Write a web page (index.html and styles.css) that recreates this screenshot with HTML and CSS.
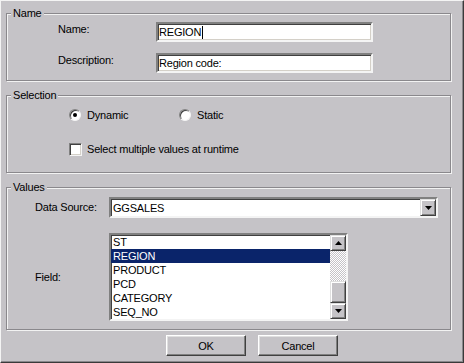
FILE: index.html
```html
<!DOCTYPE html>
<html>
<head>
<meta charset="utf-8">
<link rel="stylesheet" href="styles.css">
</head>
<body>
<div class="window">
  <fieldset class="group">
    <legend>Name</legend>
    <div class="form-grid">
      <span class="lbl">Name:</span>
      <div class="textbox"><span>REGION</span><span class="caret"></span></div>
      <span class="lbl">Description:</span>
      <div class="textbox"><span>Region code:</span></div>
    </div>
  </fieldset>
  <fieldset class="group">
    <legend>Selection</legend>
    <div class="sel-body">
      <div class="radio-row">
        <div class="opt opt-first"><span class="radio checked"></span><span>Dynamic</span></div>
        <div class="opt"><span class="radio"></span><span>Static</span></div>
      </div>
      <div class="opt"><span class="check"></span><span>Select multiple values at runtime</span></div>
    </div>
  </fieldset>
  <fieldset class="group group-last">
    <legend>Values</legend>
    <div class="val-grid">
      <span class="lbl">Data Source:</span>
      <div class="combo">
        <span class="combo-text">GGSALES</span>
        <span class="sbtn combo-btn"><svg width="7" height="4" viewBox="0 0 7 4"><polygon points="0,0 7,0 3.5,4" fill="#000"/></svg></span>
      </div>
      <span class="lbl">Field:</span>
      <div class="listbox">
        <ul class="items">
          <li>ST</li>
          <li class="selected">REGION</li>
          <li>PRODUCT</li>
          <li>PCD</li>
          <li>CATEGORY</li>
          <li>SEQ_NO</li>
        </ul>
        <div class="vscroll">
          <span class="sbtn"><svg width="7" height="4" viewBox="0 0 7 4"><polygon points="0,4 7,4 3.5,0" fill="#000"/></svg></span>
          <div class="track"><div class="thumb"></div></div>
          <span class="sbtn"><svg width="7" height="4" viewBox="0 0 7 4"><polygon points="0,0 7,0 3.5,4" fill="#000"/></svg></span>
        </div>
      </div>
    </div>
  </fieldset>
  <div class="buttons">
    <button class="btn">OK</button>
    <button class="btn">Cancel</button>
  </div>
</div>
</body>
</html>
```
FILE: styles.css
```css
body {
  margin: 0;
  background: #c5c3c7;
  font-family: "Liberation Sans", Arial, sans-serif;
  font-size: 11px;
  letter-spacing: -0.2px;
  color: #000;
}

.window {
  width: 464px;
  height: 363px;
  box-sizing: border-box;
  border-top: 1px solid #f4f4f4;
  border-left: 1px solid #f4f4f4;
  border-right: 1px solid #3a3a3a;
  border-bottom: 1px solid #3a3a3a;
  box-shadow: inset -1px -1px 0 #8a888c;
  padding: 6px 0 0 5px;
}

.group {
  margin: 0 0 8px;
  padding: 0;
  width: 445px;
  box-sizing: border-box;
  border: 1px solid #8a888c;
  box-shadow: 1px 1px 0 #f2f2f2, inset 1px 1px 0 #f2f2f2;
  min-inline-size: 0;
}

.group-last {
  margin-bottom: 0;
}

legend {
  margin-left: 4px;
  padding: 0 2px;
  line-height: 13px;
  background: #c5c3c7;
}

.lbl {
  line-height: 13px;
}

/* Name group */
.form-grid {
  display: grid;
  grid-template-columns: 98px 217px;
  grid-auto-rows: 20px;
  row-gap: 11px;
  padding: 2px 0 7px 51px;
}

.form-grid .lbl {
  padding-top: 1px;
}

.textbox {
  box-sizing: border-box;
  height: 20px;
  background: #fff;
  border: 2px solid;
  border-color: #808080 #f4f4f4 #f4f4f4 #808080;
  box-shadow: inset 1px 1px 0 #404040, inset -1px -1px 0 #d4d0c8;
  padding: 0 0 0 1px;
  line-height: 16px;
  display: flex;
  align-items: center;
  white-space: nowrap;
}

.caret {
  display: inline-block;
  width: 1px;
  height: 13px;
  background: #000;
  margin-left: 1px;
}

/* Selection group */
.sel-body {
  display: flex;
  flex-direction: column;
  gap: 22px;
  padding: 7px 0 16px 62px;
}

.radio-row {
  display: flex;
  height: 12px;
}

.opt {
  display: flex;
  align-items: center;
  line-height: 13px;
}

.opt-first {
  width: 110px;
}

.radio {
  width: 12px;
  height: 12px;
  box-sizing: border-box;
  border-radius: 50%;
  border: 1px solid;
  border-color: #808080 #f4f4f4 #f4f4f4 #808080;
  background: #fff;
  box-shadow: inset 1px 1px 0 #404040;
  margin-right: 6px;
  display: flex;
  align-items: center;
  justify-content: center;
}

.radio.checked::after {
  content: "";
  width: 4px;
  height: 4px;
  border-radius: 50%;
  background: #000;
}

.check {
  width: 13px;
  height: 13px;
  box-sizing: border-box;
  border: 1px solid;
  border-color: #808080 #f4f4f4 #f4f4f4 #808080;
  background: #fff;
  box-shadow: inset 1px 1px 0 #404040, inset -1px -1px 0 #d4d0c8;
  margin-right: 5px;
}

/* Values group */
.val-grid {
  display: grid;
  grid-template-columns: 74px 329px;
  grid-template-rows: 21px 88px;
  row-gap: 15px;
  align-items: center;
  padding: 3px 0 8px 28px;
}

.combo {
  box-sizing: border-box;
  height: 21px;
  background: #fff;
  border: 2px solid;
  border-color: #808080 #f4f4f4 #f4f4f4 #808080;
  box-shadow: inset 1px 1px 0 #404040;
  display: flex;
  align-items: center;
}

.combo-text {
  flex: 1;
  padding-left: 2px;
}

.sbtn {
  width: 16px;
  height: 16px;
  box-sizing: border-box;
  background: #c5c3c7;
  border: 1px solid;
  border-color: #dfdfdf #404040 #404040 #dfdfdf;
  box-shadow: inset 1px 1px 0 #fff, inset -1px -1px 0 #808080;
  display: flex;
  align-items: center;
  justify-content: center;
  flex-shrink: 0;
}

.combo-btn {
  height: 17px;
}

.listbox {
  box-sizing: border-box;
  width: 239px;
  height: 88px;
  background: #fff;
  border: 2px solid;
  border-color: #808080 #f4f4f4 #f4f4f4 #808080;
  box-shadow: inset 1px 1px 0 #404040;
  display: flex;
}

.items {
  list-style: none;
  margin: 0;
  padding: 0;
  flex: 1;
}

.items li {
  height: 14px;
  line-height: 14px;
  padding-left: 2px;
}

.items li.selected {
  background: #0a246a;
  color: #fff;
}

.vscroll {
  width: 16px;
  display: flex;
  flex-direction: column;
}

.track {
  flex: 1;
  display: flex;
  flex-direction: column;
  justify-content: flex-end;
  background: repeating-conic-gradient(#ffffff 0 25%, #c5c3c7 0 50%) 0 0 / 2px 2px;
}

.thumb {
  height: 22px;
  box-sizing: border-box;
  background: #c5c3c7;
  border: 1px solid;
  border-color: #dfdfdf #404040 #404040 #dfdfdf;
  box-shadow: inset 1px 1px 0 #fff, inset -1px -1px 0 #808080;
}

/* Buttons */
.buttons {
  display: flex;
  gap: 12px;
  margin-top: 5px;
  padding-left: 160px;
}

.btn {
  width: 80px;
  height: 21px;
  padding: 0;
  font: inherit;
  letter-spacing: inherit;
  color: #000;
  background: #c5c3c7;
  border: 1px solid;
  border-color: #fff #404040 #404040 #fff;
  box-shadow: inset -1px -1px 0 #808080, inset 1px 1px 0 #dfdfdf;
}
```
